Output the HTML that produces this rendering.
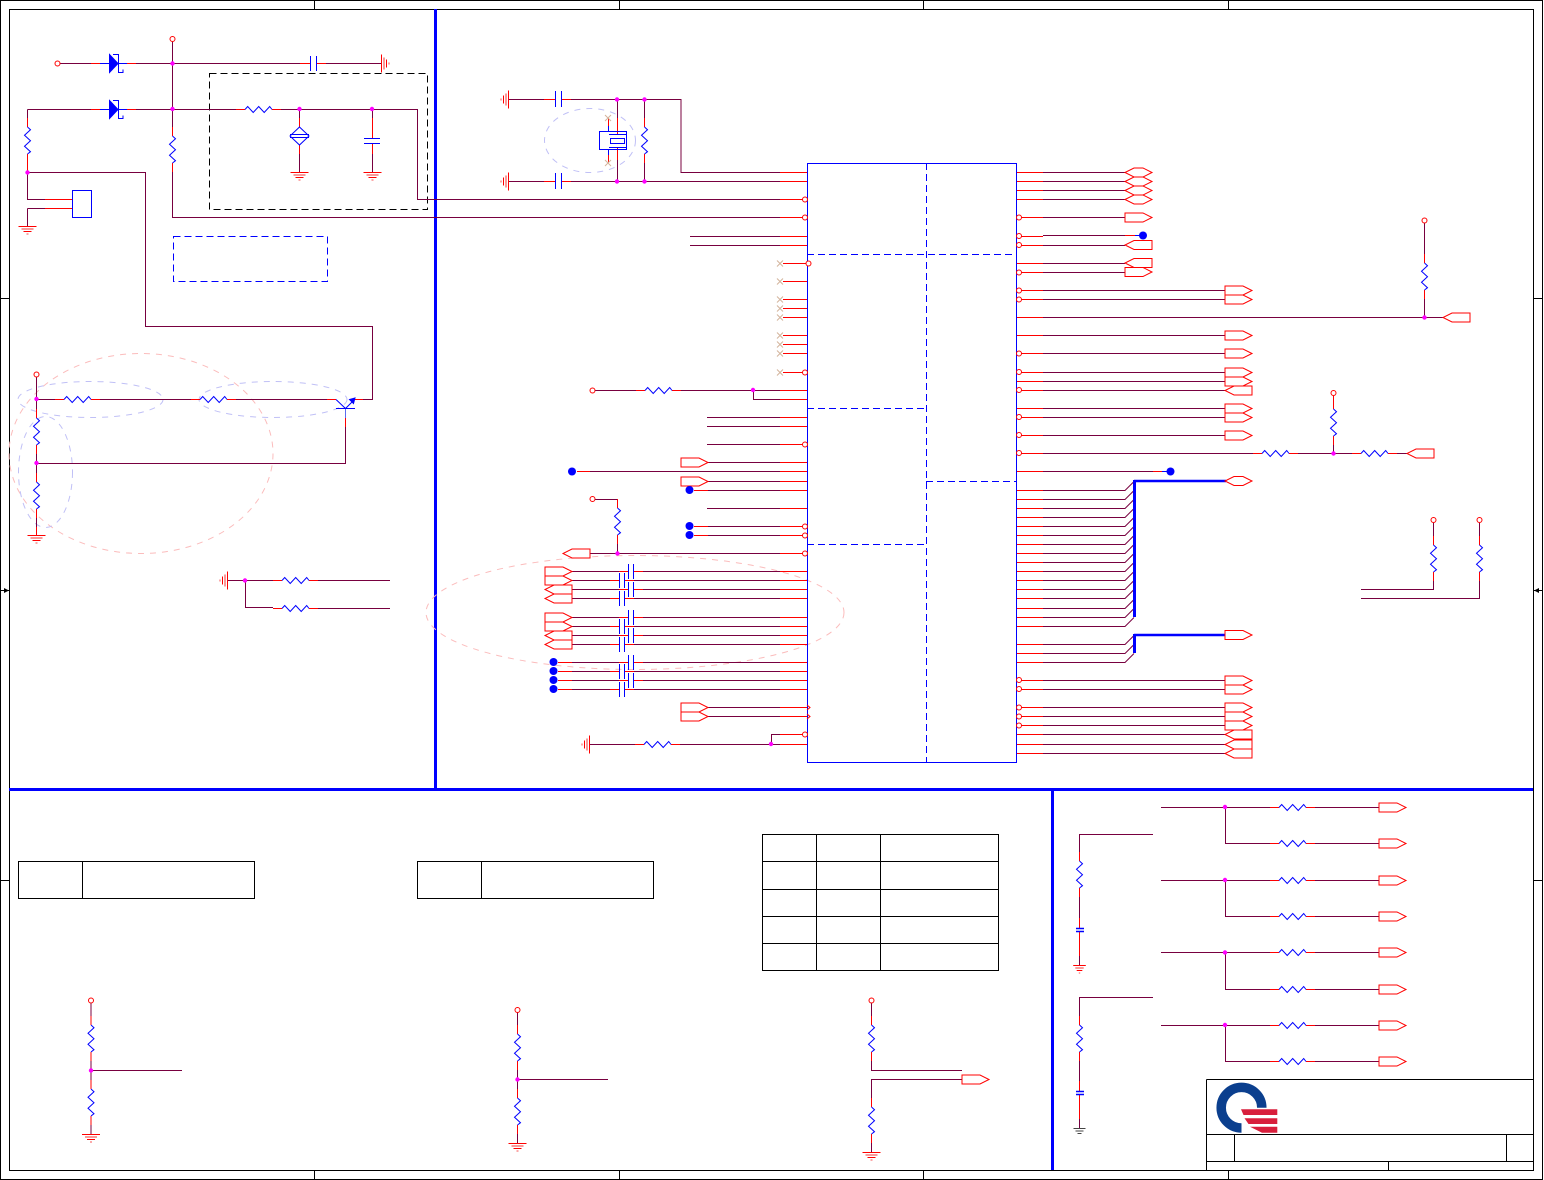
<!DOCTYPE html>
<html lang="en"><head><meta charset="utf-8"><title>Schematic</title>
<style>
html,body{margin:0;padding:0;background:#fff;width:1544px;height:1180px;overflow:hidden}
svg{display:block}
path,rect,ellipse,circle{fill:none;stroke-width:1}
.w{stroke:#78003f}.r{stroke:#f00}.b{stroke:#00f}.k{stroke:#000}
.th{stroke:#00f;stroke-width:3}
.da{stroke-dasharray:7 4}
.el{stroke:#fbbcbc;stroke-dasharray:6 6}
.eb{stroke:#c0c0f6;stroke-dasharray:6 6}
</style></head><body>
<svg width="1544" height="1180" viewBox="0 0 1544 1180" xmlns="http://www.w3.org/2000/svg">
<defs>
<g id="rh"><path class="r" d="M-9 0H0M27 0H36"/><path class="b" d="M0 0L2.7-3 8.2 3 13.7-3 19.2 3 24.7-3 27 0"/></g>
<g id="pr"><path class="r" style="fill:#fff" d="M0-4.5H18L27 0 18 4.5H0Z"/></g>
<g id="pl"><path class="r" style="fill:#fff" d="M27-4.5H9L0 0 9 4.5H27Z"/></g>
<g id="hx"><path class="r" style="fill:#fff" d="M0 0L9-4.5H18L27 0 18 4.5H9Z"/></g>
<circle id="ri" class="r" style="fill:#fff" r="2.5"/>
<circle id="bu" class="r" style="fill:#fff" r="2.5"/>
<circle id="dt" style="fill:#00f;stroke:none" r="4"/>
<circle id="j" style="fill:#f0f;stroke:none" r="2.2"/>
<path id="xm" style="stroke:#d4b49c" d="M-3-3L3 3M-3 3L3-3"/>
<g id="dz"><path class="r" d="M-9 0H0M27 0H36"/><path class="b" d="M0 0H27"/><path style="fill:#00f;stroke:#00f" d="M9.5-9L18 0 9.5 9Z"/><path class="b" d="M13-9H18.500V9H23V6"/></g>
<g id="gd"><path class="r" d="M-9 .5H9"/><path style="stroke:#fa9a9a;stroke-width:2" d="M-6 3H6"/><path class="r" d="M-4 5.500H4"/><path style="stroke:#fa8a8a;stroke-width:1.500" d="M-1 8H1"/></g>
<g id="gk"><path style="stroke:#444" d="M-6 .5H6M-4 3H4M-2 5.500H2"/></g>
</defs>

<!-- frame -->
<rect class="k" x=".5" y=".5" width="1542" height="1179"/>
<rect class="k" x="9.5" y="9.5" width="1524" height="1161"/>
<path class="k" d="M314.500 0V9M619.500 0V9M923.500 0V9M1228.500 0V9M314.500 1170V1180M619.500 1170V1180M923.500 1170V1180M1228.500 1170V1180M0 298.500H9M0 590.500H9M0 880.500H9M1534 298.500H1543M1534 590.500H1543M1534 880.500H1543"/>
<path style="fill:#000;stroke:none" d="M4 588L9 590.500 4 593ZM1539 588L1534 590.500 1539 593Z"/>

<!-- big separators -->
<path class="th" d="M435.500 9V789M9 789.500H1533M1052.500 789V1170"/>

<!-- ellipses -->
<ellipse class="el" cx="141" cy="453.500" rx="132" ry="100"/>
<ellipse class="eb" cx="90.500" cy="399.500" rx="72.500" ry="18"/>
<ellipse class="eb" cx="273" cy="399.500" rx="74" ry="18"/>
<ellipse class="eb" cx="45.500" cy="472" rx="27" ry="55.500"/>
<ellipse class="eb" cx="590" cy="140.500" rx="45.500" ry="32"/>
<ellipse class="el" cx="635" cy="612.500" rx="209" ry="57"/>

<!-- dashed boxes -->
<rect class="k da" x="209.500" y="73.500" width="218" height="136"/>
<rect class="b da" x="173.500" y="236.500" width="154" height="45"/>

<!-- maroon wires: left sheet -->
<path class="w" d="M60 63.500H91M136 63.500H300M326 63.500H381
M136 109.500H236M281 109.500H417.500V199.500H780
M27.500 109.500H91M27.500 109.500V118M27.500 163V199.500H45M27.500 172.500H145.500V326.500H372.500V399.500H363
M27.500 208.500H45M27.500 208.500V226
M172.500 42V127M172.500 172V217.500H780
M299.500 109.500V118M299.500 154V172M372.500 109.500V118M372.500 154V172
M36.500 377V409M36.500 454V473M36.500 517V535M36.500 463.500H345.500V427
M36.500 399.500H55M100 399.500H191M236 399.500H327
M228 580.500H273M318 580.500H390M245.500 580.500V607.500H273M318 608.500H390"/>

<!-- maroon wires: IC left -->
<path class="w" d="M508 99.500H544M571 99.500H681V172.500H780M508 181.500H544M571 181.500H780
M617.500 99.500V118M617.500 160V181M644.500 99.500V118M644.500 163V181
M690 236.500H780M690 245.500H780
M595 390.500H636M681 390.500H780M753.500 390.500V399.500H780
M707 417.500H780M707 426.500H780M707 444.500H780
M708 462.500H780M590 471.500H780M708 481.500H780M698 490.500H780M707 508.500H780M698 526.500H780M698 535.500H780
M590 553.500H780M595 499.500H617.500M617.500 544V553.500
M572 571.500H619M643 571.500H780M572 589.500H619M643 589.500H780M572 617.500H619M643 617.500H780M572 635.500H619M643 635.500H780
M572 662.500H619M643 662.500H780M572 680.500H619M643 680.500H780
M572 580.500H610M634 580.500H780M572 598.500H610M634 598.500H780M572 626.500H610M634 626.500H780M572 644.500H610M634 644.500H780
M572 671.500H610M634 671.500H780M572 689.500H610M634 689.500H780
M708 707.500H780M708 716.500H780M771.500 744.500V734.500H780M590 744.500H635M680 744.500H780"/>

<!-- maroon wires: IC right -->
<path class="w" d="M1043 172.500H1125M1043 181.500H1125M1043 190.500H1125M1043 199.500H1125M1043 217.500H1125M1043 235.500H1125M1043 245.500H1125M1043 263.500H1125M1043 272.500H1125
M1043 290.500H1225M1043 299.500H1225M1043 317.500H1443M1043 335.500H1225M1043 353.500H1225M1043 372.500H1225M1043 381.500H1225M1043 390.500H1225M1043 408.500H1225M1043 417.500H1225M1043 435.500H1225
M1043 453.500H1253M1298 453.500H1352M1397 453.500H1407M1043 471.500H1153
M1043 490.500H1125L1134 481.500M1043 499.500H1125L1134 490.500M1043 508.500H1125L1134 499.500M1043 517.500H1125L1134 508.500M1043 526.500H1125L1134 517.500M1043 535.500H1125L1134 526.500M1043 544.500H1125L1134 535.500M1043 553.500H1125L1134 544.500M1043 562.500H1125L1134 553.500M1043 571.500H1125L1134 562.500M1043 580.500H1125L1134 571.500M1043 589.500H1125L1134 580.500M1043 598.500H1125L1134 589.500M1043 608.500H1125L1134 599.500M1043 617.500H1125L1134 608.500M1043 626.500H1125L1134 617.500
M1043 644.500H1125L1134 635.500M1043 653.500H1125L1134 644.500M1043 662.500H1125L1134 653.500
M1043 680.500H1225M1043 689.500H1225M1043 707.500H1225M1043 716.500H1225M1043 725.500H1225M1043 734.500H1225M1043 744.500H1225M1043 753.500H1225
M1424.500 223V254M1424.500 299V317M1333.500 445V453M1433.500 523V536M1433.500 581V589.500H1361M1479.500 523V536M1479.500 581V598.500H1361"/>

<!-- maroon wires: bottom -->
<path class="w" d="M1161 807.500H1270M1315 807.500H1379M1225.500 807.500V843.500H1270M1315 843.500H1379
M1161 880.500H1270M1315 880.500H1379M1225.500 880.500V916.500H1270M1315 916.500H1379
M1161 952.500H1270M1315 952.500H1379M1225.500 952.500V989.500H1270M1315 989.500H1379
M1161 1025.500H1270M1315 1025.500H1379M1225.500 1025.500V1061.500H1270M1315 1061.500H1379
M1153 834.500H1079.500V852M1079.500 897V918M1079.500 956V965
M1153 997.500H1079.500V1016M1079.500 1061V1081M1079.500 1095V1128
M91 1003V1016M91 1061V1080M91 1125V1134M91 1070.500H182
M517.500 1012V1025M517.500 1070V1089M517.500 1134V1143M517.500 1079.500H608
M871.500 1003V1016M871.500 1061V1070.500H962M962 1079.500H871.500V1098M871.500 1143V1152"/>

<!-- red pins -->
<path class="r" d="M780 172.500H807M780 181.500H807M780 199.500H807M780 217.500H807M780 236.500H807M780 245.500H807M783 263.500H807M783 281.500H807M783 299.500H807M783 308.500H807M783 317.500H807M783 335.500H807M783 344.500H807M783 353.500H807M783 372.500H807M780 390.500H807M780 399.500H807M780 417.500H807M780 426.500H807M780 444.500H807M780 462.500H807M780 471.500H807M780 481.500H807M780 490.500H807M780 508.500H807M780 526.500H807M780 535.500H807M780 553.500H807M780 571.500H807M780 580.500H807M780 589.500H807M780 598.500H807M780 617.500H807M780 626.500H807M780 635.500H807M780 644.500H807M780 662.500H807M780 671.500H807M780 680.500H807M780 689.500H807M780 707.500H807M780 716.500H807M780 734.500H807M780 744.500H807
M544 99.500H555M561 99.500H571M544 181.500H555M561 181.500H571
M619 571.500H628M634 571.500H643M619 589.500H628M634 589.500H643M619 617.500H628M634 617.500H643M619 635.500H628M634 635.500H643M619 662.500H628M634 662.500H643M619 680.500H628M634 680.500H643
M610 580.500H619M625 580.500H634M610 598.500H619M625 598.500H634M610 626.500H619M625 626.500H634M610 644.500H619M625 644.500H634M610 671.500H619M625 671.500H634M610 689.500H619M625 689.500H634
M558 662.500H572M558 671.500H572M558 680.500H572M558 689.500H572M694 490.500H708M694 526.500H708M694 535.500H708M577 471.500H590
M617.500 118V134M617.500 147V160M608.500 118V131M608.500 150V163
M300 63.500H310M317 63.500H326M45 199.500H72M45 208.500H72M299.500 118V127M299.500 145V154M372.500 118V138M372.500 144V154
M327 399.500H336M355 399.500H363M345.500 418V427M27.500 163V172M36.500 527V535
M1016 172.500H1043M1016 181.500H1043M1016 190.500H1043M1016 199.500H1043M1016 217.500H1043M1016 236.500H1043M1016 245.500H1043M1016 263.500H1043M1016 272.500H1043M1016 290.500H1043M1016 299.500H1043M1016 317.500H1043M1016 335.500H1043M1016 353.500H1043M1016 372.500H1043M1016 381.500H1043M1016 390.500H1043M1016 408.500H1043M1016 417.500H1043M1016 435.500H1043M1016 453.500H1043M1016 471.500H1043
M1016 490.500H1043M1016 499.500H1043M1016 508.500H1043M1016 517.500H1043M1016 526.500H1043M1016 535.500H1043M1016 544.500H1043M1016 553.500H1043M1016 562.500H1043M1016 571.500H1043M1016 580.500H1043M1016 589.500H1043M1016 598.500H1043M1016 608.500H1043M1016 617.500H1043M1016 626.500H1043M1016 644.500H1043M1016 653.500H1043M1016 662.500H1043M1016 680.500H1043M1016 689.500H1043M1016 707.500H1043M1016 716.500H1043M1016 725.500H1043M1016 734.500H1043M1016 744.500H1043M1016 753.500H1043
M1125 235.500H1135M1153 471.500H1162M1333.500 396V409
M1079.500 918V928M1079.500 932V956M1079.500 1081V1091M1079.500 1095V1119"/>
<path class="b" d="M1135 235.500H1143M1162 471.500H1170"/>

<!-- bus -->
<path class="b" style="stroke-width:3" d="M1134.500 480V617M1134.500 634V653"/>
<path class="b" style="stroke-width:2.500" d="M1134 481H1226M1134 635H1226"/>

<!-- IC -->
<rect class="b" x="807.500" y="163.500" width="209" height="599"/>
<path class="b da" d="M926.500 163V762M807 254.500H1016M807 408.500H926M807 544.500H926M926 481.500H1016"/>

<!-- connector J -->
<rect class="b" x="72.500" y="190.500" width="19" height="27"/>

<!-- caps -->
<path class="b" d="M310.500 56V71M316.500 56V71M555.500 91V107M561.500 91V107M555.500 173V189M561.500 173V189
M364 138.500H380M364 143.500H380
M628.500 564V579M633.500 564V579M628.500 582V597M633.500 582V597M628.500 610V625M633.500 610V625M628.500 628V643M633.500 628V643M628.500 655V670M633.500 655V670M628.500 673V688M633.500 673V688
M619.500 573V588M624.500 573V588M619.500 591V606M624.500 591V606M619.500 619V634M624.500 619V634M619.500 637V652M624.500 637V652M619.500 664V679M624.500 664V679M619.500 682V697M624.500 682V697"/>
<path class="b" style="stroke-width:1.500" d="M1076 928.500H1084M1076 931.500H1084M1076 1091.500H1084M1076 1094.500H1084"/>

<!-- LED-ish diamond -->
<path class="b" d="M299.500 127L309 136 299.500 145 290 136ZM290 134.500H309M290 137.500H309"/>

<!-- crystal -->
<rect class="b" x="599.500" y="131.500" width="27" height="18"/>
<rect class="b" x="610.500" y="138.500" width="14" height="5"/>
<path class="b" d="M609 134.500H626M609 147.500H626"/>
<path class="b" d="M608.500 126V131M608.500 150V155"/>

<!-- transistor -->
<path class="b" d="M336 399.500L345.500 408.500 354 400M336 408.500H355"/>
<path style="stroke:#5a6cf0;stroke-width:1" d="M345.500 409V418"/>
<path style="fill:#00f;stroke:#00f" d="M355 398L349.500 399.500 353.500 403.500Z"/>

<!-- diodes -->
<use href="#dz" transform="translate(100 63.500)"/>
<use href="#dz" transform="translate(100 109.500)"/>

<!-- horizontal resistors -->
<use href="#rh" transform="translate(245 109.500)"/>
<use href="#rh" transform="translate(64 399.500)"/>
<use href="#rh" transform="translate(200 399.500)"/>
<use href="#rh" transform="translate(282 580.500)"/>
<use href="#rh" transform="translate(282 608.500)"/>
<use href="#rh" transform="translate(645 390.500)"/>
<use href="#rh" transform="translate(644 744.500)"/>
<use href="#rh" transform="translate(1262 453.500)"/>
<use href="#rh" transform="translate(1361 453.500)"/>
<use href="#rh" transform="translate(1279 807.500)"/>
<use href="#rh" transform="translate(1279 843.500)"/>
<use href="#rh" transform="translate(1279 880.500)"/>
<use href="#rh" transform="translate(1279 916.500)"/>
<use href="#rh" transform="translate(1279 952.500)"/>
<use href="#rh" transform="translate(1279 989.500)"/>
<use href="#rh" transform="translate(1279 1025.500)"/>
<use href="#rh" transform="translate(1279 1061.500)"/>

<!-- vertical resistors -->
<use href="#rh" transform="translate(27.500 127) rotate(90)"/>
<use href="#rh" transform="translate(172.500 136) rotate(90)"/>
<use href="#rh" transform="translate(36.500 418) rotate(90)"/>
<use href="#rh" transform="translate(36.500 482) rotate(90)"/>
<use href="#rh" transform="translate(617.500 508) rotate(90)"/>
<use href="#rh" transform="translate(644.500 127) rotate(90)"/>
<use href="#rh" transform="translate(1424.500 263) rotate(90)"/>
<use href="#rh" transform="translate(1333.500 409) rotate(90)"/>
<use href="#rh" transform="translate(1433.500 545) rotate(90)"/>
<use href="#rh" transform="translate(1479.500 545) rotate(90)"/>
<use href="#rh" transform="translate(1079.500 861) rotate(90)"/>
<use href="#rh" transform="translate(1079.500 1025) rotate(90)"/>
<use href="#rh" transform="translate(91 1025) rotate(90)"/>
<use href="#rh" transform="translate(91 1089) rotate(90)"/>
<use href="#rh" transform="translate(517.500 1034) rotate(90)"/>
<use href="#rh" transform="translate(517.500 1098) rotate(90)"/>
<use href="#rh" transform="translate(871.500 1025) rotate(90)"/>
<use href="#rh" transform="translate(871.500 1107) rotate(90)"/>

<!-- grounds -->
<use href="#gd" transform="translate(27.500 226)"/>
<use href="#gd" transform="translate(299.500 172)"/>
<use href="#gd" transform="translate(372.500 172)"/>
<use href="#gd" transform="translate(36.500 535)"/>
<use href="#gd" transform="translate(1079.500 965) scale(.7 1)"/>
<use href="#gk" transform="translate(1079.500 1128)"/>
<use href="#gd" transform="translate(91 1134)"/>
<use href="#gd" transform="translate(517.500 1143)"/>
<use href="#gd" transform="translate(871.500 1152)"/>
<use href="#gd" transform="translate(381 63.500) rotate(-90)"/>
<use href="#gd" transform="translate(228 580.500) rotate(90)"/>
<use href="#gd" transform="translate(509 99.500) rotate(90)"/>
<use href="#gd" transform="translate(509 181.500) rotate(90)"/>
<use href="#gd" transform="translate(590 744.500) rotate(90)"/>

<!-- rings -->
<use href="#ri" x="57.500" y="63.500"/><use href="#ri" x="172.500" y="39"/><use href="#ri" x="36.500" y="374.500"/>
<use href="#ri" x="592.500" y="390.500"/><use href="#ri" x="592.500" y="499"/>
<use href="#ri" x="1424.500" y="220.500"/><use href="#ri" x="1333.500" y="393"/><use href="#ri" x="1433.500" y="520"/><use href="#ri" x="1479.500" y="520"/>
<use href="#ri" x="91" y="1000.500"/><use href="#ri" x="517.500" y="1010"/><use href="#ri" x="871.500" y="1000.500"/>

<!-- IC bubbles -->
<use href="#bu" x="805" y="199.500"/><use href="#bu" x="805" y="217.500"/><use href="#bu" x="808.500" y="263.500"/><use href="#bu" x="805" y="372.500"/><use href="#bu" x="805" y="444.500"/><use href="#bu" x="805" y="526.500"/><use href="#bu" x="805" y="535.500"/><use href="#bu" x="805" y="553.500"/><use href="#bu" x="805" y="734.500"/>
<use href="#bu" x="1019" y="217.500"/><use href="#bu" x="1019" y="236"/><use href="#bu" x="1019" y="245"/><use href="#bu" x="1019" y="272.500"/><use href="#bu" x="1019" y="290.500"/><use href="#bu" x="1019" y="299.500"/><use href="#bu" x="1019" y="353.500"/><use href="#bu" x="1019" y="372"/><use href="#bu" x="1019" y="390"/><use href="#bu" x="1019" y="417"/><use href="#bu" x="1019" y="435"/><use href="#bu" x="1019" y="453"/><use href="#bu" x="1019" y="680"/><use href="#bu" x="1019" y="689"/><use href="#bu" x="1019" y="707.500"/><use href="#bu" x="1019" y="716.500"/><use href="#bu" x="1019" y="725.500"/>
<path class="r" d="M807 705L810 707.500 807 710M807 714L810 716.500 807 719"/>

<!-- no-connect marks -->
<use href="#xm" x="780" y="263.500"/><use href="#xm" x="780" y="281.500"/><use href="#xm" x="780" y="299.500"/><use href="#xm" x="780" y="308.500"/><use href="#xm" x="780" y="317.500"/><use href="#xm" x="780" y="335.500"/><use href="#xm" x="780" y="344.500"/><use href="#xm" x="780" y="353.500"/><use href="#xm" x="780" y="372.500"/>
<use href="#xm" x="608" y="118"/><use href="#xm" x="608" y="163"/>

<!-- ports -->
<use href="#pl" x="563" y="553.500"/>
<use href="#pr" x="681" y="462.500"/><use href="#pr" x="681" y="481.500"/><use href="#pr" x="681" y="707.500"/><use href="#pr" x="681" y="716.500"/>
<use href="#pr" x="545" y="571.500"/><use href="#pr" x="545" y="580.500"/><use href="#pl" x="545" y="589.500"/><use href="#pl" x="545" y="598.500"/>
<use href="#pr" x="545" y="617.500"/><use href="#pr" x="545" y="626.500"/><use href="#pl" x="545" y="635.500"/><use href="#pl" x="545" y="644.500"/>
<use href="#hx" x="1125" y="172.500"/><use href="#hx" x="1125" y="181.500"/><use href="#hx" x="1125" y="190.500"/><use href="#hx" x="1125" y="199.500"/>
<use href="#pr" x="1125" y="217.500"/><use href="#pl" x="1125" y="245"/><use href="#pl" x="1125" y="263"/><use href="#pr" x="1125" y="272"/>
<use href="#pr" x="1225" y="290.500"/><use href="#pr" x="1225" y="299.500"/><use href="#pr" x="1225" y="335.500"/><use href="#pr" x="1225" y="353.500"/><use href="#pr" x="1225" y="372.500"/><use href="#pr" x="1225" y="381.500"/><use href="#pl" x="1225" y="390.500"/><use href="#pr" x="1225" y="408.500"/><use href="#pr" x="1225" y="417.500"/><use href="#pr" x="1225" y="435.500"/>
<use href="#hx" x="1225" y="481"/><use href="#pr" x="1225" y="635"/>
<use href="#pr" x="1225" y="680.500"/><use href="#pr" x="1225" y="689.500"/><use href="#pr" x="1225" y="707.500"/><use href="#pr" x="1225" y="716.500"/><use href="#pr" x="1225" y="725.500"/>
<use href="#pl" x="1225" y="734.500"/><use href="#pl" x="1225" y="744.500"/><use href="#pl" x="1225" y="753.500"/>
<use href="#pl" x="1443" y="317.500"/><use href="#pl" x="1407" y="453.500"/>
<use href="#pr" x="1379" y="807.500"/><use href="#pr" x="1379" y="843.500"/><use href="#pr" x="1379" y="880.500"/><use href="#pr" x="1379" y="916.500"/><use href="#pr" x="1379" y="952.500"/><use href="#pr" x="1379" y="989.500"/><use href="#pr" x="1379" y="1025.500"/><use href="#pr" x="1379" y="1061.500"/>
<use href="#pr" x="962" y="1079.500"/>

<!-- blue dots -->
<use href="#dt" x="1143" y="235.500"/><use href="#dt" x="1170.500" y="471.500"/><use href="#dt" x="572" y="471.500"/><use href="#dt" x="689.500" y="490"/><use href="#dt" x="689.500" y="526"/><use href="#dt" x="689.500" y="535"/>
<use href="#dt" x="553.500" y="662"/><use href="#dt" x="553.500" y="671"/><use href="#dt" x="553.500" y="680"/><use href="#dt" x="553.500" y="689"/>

<!-- junctions -->
<use href="#j" x="172.500" y="63.500"/><use href="#j" x="172.500" y="109"/><use href="#j" x="299.500" y="109"/><use href="#j" x="372" y="109"/><use href="#j" x="27.500" y="172.500"/><use href="#j" x="36.500" y="399"/><use href="#j" x="36.500" y="463"/><use href="#j" x="245" y="580.500"/><use href="#j" x="617" y="99.500"/><use href="#j" x="644.500" y="99.500"/><use href="#j" x="617" y="181.500"/><use href="#j" x="644.500" y="181.500"/><use href="#j" x="753" y="390"/><use href="#j" x="617.500" y="553.500"/><use href="#j" x="771" y="744"/><use href="#j" x="1424.500" y="317.500"/><use href="#j" x="1333.500" y="453.500"/><use href="#j" x="1225" y="807"/><use href="#j" x="1225" y="880"/><use href="#j" x="1225" y="952.500"/><use href="#j" x="1225" y="1025"/><use href="#j" x="91" y="1070.500"/><use href="#j" x="517.500" y="1079.500"/>

<!-- tables -->
<path class="k" d="M18.500 861.500H254.500V898.500H18.500ZM82.500 861.500V898.500
M417.500 861.500H653.500V898.500H417.500ZM481.500 861.500V898.500
M762.500 834.500H998.500V970.500H762.500ZM762.500 861.500H998.500M762.500 889.500H998.500M762.500 916.500H998.500M762.500 943.500H998.500M816.500 834.500V970.500M880.500 834.500V970.500"/>

<!-- title block -->
<path class="k" d="M1206.500 1079.500H1533.500M1206.500 1079.500V1170M1206.500 1134.500H1533.500M1206.500 1161.500H1533.500M1234.500 1134.500V1161.500M1506.500 1134.500V1161.500M1388.500 1161.500V1170"/>

<!-- logo -->
<path style="fill:none;stroke:#0b3f8e;stroke-width:9.500" d="M1241.500 1128A20.300 20.300 0 1 1 1261.800 1107.700"/>
<path style="fill:#d81f3c;stroke:none" d="M1241 1109.300H1277.300V1115H1243.500ZM1244.500 1118.300H1277.300V1124H1248.500ZM1250 1126.800H1277.300V1132.800H1262Z"/>
</svg>
</body></html>
